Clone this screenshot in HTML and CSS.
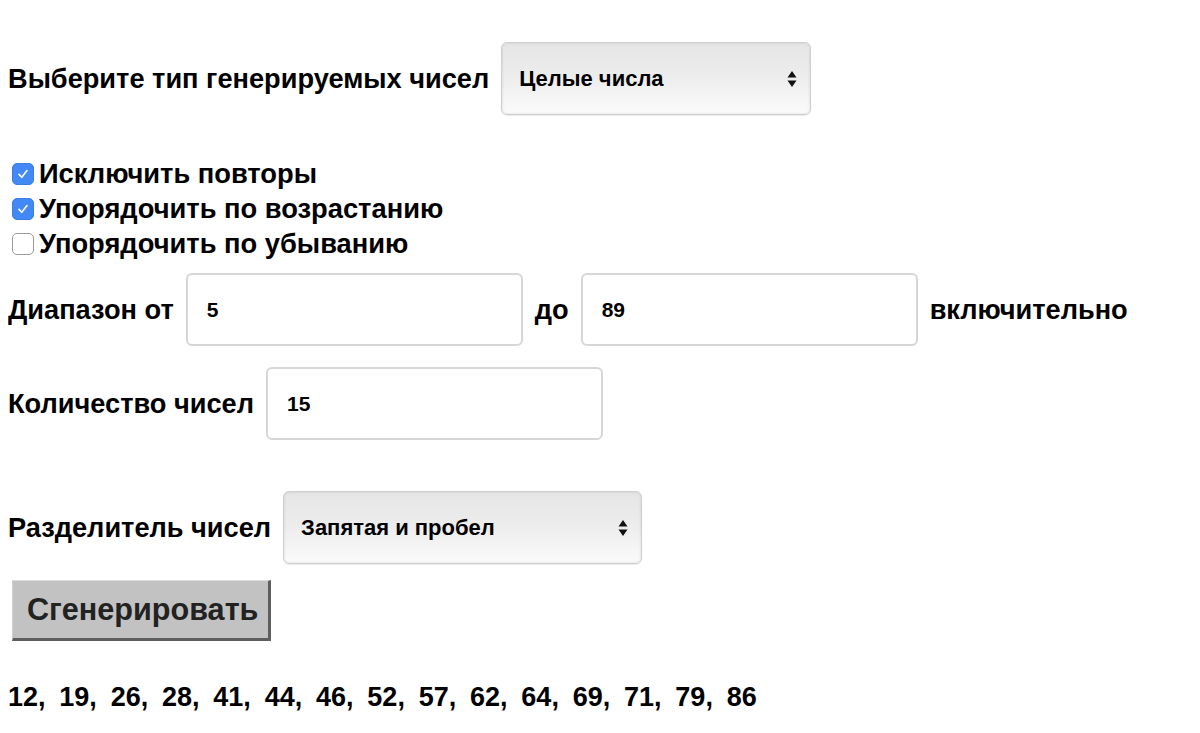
FILE: index.html
```html
<!DOCTYPE html>
<html lang="ru">
<head>
<meta charset="utf-8">
<title>Генератор случайных чисел</title>
<link rel="stylesheet" href="styles.css">
</head>
<body>
<form class="gen">
  <div class="row row-type">
    <span class="lbl">Выберите тип генерируемых чисел</span>
    <span class="sel sel-type">
      <span class="sel-text">Целые числа</span>
      <svg class="arrows" width="10" height="18" viewBox="0 0 10 18"><path d="M5 1 L9.5 7.5 L0.5 7.5 Z M5 17 L9.5 10.5 L0.5 10.5 Z" fill="#111"/></svg>
    </span>
  </div>

  <div class="checks">
    <label class="chk"><span class="box on"><svg width="14" height="14" viewBox="0 0 14 14"><path d="M3 7.4 L5.8 10.3 L11 3.6" fill="none" stroke="#fff" stroke-width="1.6" stroke-linecap="round" stroke-linejoin="round"/></svg></span>Исключить повторы</label>
    <label class="chk"><span class="box on"><svg width="14" height="14" viewBox="0 0 14 14"><path d="M3 7.4 L5.8 10.3 L11 3.6" fill="none" stroke="#fff" stroke-width="1.6" stroke-linecap="round" stroke-linejoin="round"/></svg></span>Упорядочить по возрастанию</label>
    <label class="chk"><span class="box"></span>Упорядочить по убыванию</label>
  </div>

  <div class="row row-range">
    <span class="lbl">Диапазон от</span>
    <span class="inp">5</span>
    <span class="lbl">до</span>
    <span class="inp">89</span>
    <span class="lbl">включительно</span>
  </div>

  <div class="row row-count">
    <span class="lbl">Количество чисел</span>
    <span class="inp">15</span>
  </div>

  <div class="row row-sep">
    <span class="lbl">Разделитель чисел</span>
    <span class="sel sel-sep">
      <span class="sel-text">Запятая и пробел</span>
      <svg class="arrows" width="10" height="18" viewBox="0 0 10 18"><path d="M5 1 L9.5 7.5 L0.5 7.5 Z M5 17 L9.5 10.5 L0.5 10.5 Z" fill="#111"/></svg>
    </span>
  </div>

  <div class="btn-row"><span class="btn">Сгенерировать</span></div>

  <div class="result">12, 19, 26, 28, 41, 44, 46, 52, 57, 62, 64, 69, 71, 79, 86</div>
</form>
</body>
</html>
```

FILE: styles.css
```css
html, body {
  background: #fff;
}
body {
  margin: 8px;
  font-family: "Liberation Sans", Arial, sans-serif;
  font-weight: bold;
  color: #000;
}
.gen {
  display: flex;
  flex-direction: column;
}
.row {
  display: flex;
  align-items: center;
  gap: 12px;
}
.lbl {
  font-size: 27.2px;
  white-space: nowrap;
}
.row-type {
  margin-top: 34px;
}
.sel {
  position: relative;
  display: flex;
  align-items: center;
  height: 73px;
  box-sizing: border-box;
  border: 1px solid #cfcfcf;
  border-radius: 6px;
  background: linear-gradient(#e6e6e6 0%, #ececec 45%, #fbfbfb 100%);
  box-shadow: inset 0 0 3px rgba(0,0,0,0.12), 0 1px 1px rgba(0,0,0,0.08);
  padding-left: 17px;
}
.sel-type { width: 310px; }
.sel-sep { width: 359px; }
.sel-text {
  font-size: 22px;
}
.arrows {
  position: absolute;
  right: 13px;
  top: 27px;
}
.checks {
  margin-top: 41px;
  display: flex;
  flex-direction: column;
}
.chk {
  display: flex;
  align-items: center;
  height: 35px;
  font-size: 27.3px;
}
.box {
  width: 22px;
  height: 22px;
  box-sizing: border-box;
  margin: 0 5px 0 4px;
  border-radius: 5px;
  border: 1px solid #9a9a9a;
  background: #fff;
  display: flex;
  align-items: center;
  justify-content: center;
}
.box.on {
  background: #4289f6;
  border-color: #3a7de8;
}
.row-range {
  margin-top: 12px;
}
.inp {
  display: flex;
  align-items: center;
  width: 337px;
  height: 73px;
  box-sizing: border-box;
  border: 2px solid #d6d6d6;
  border-radius: 6px;
  padding-left: 19px;
  font-size: 21px;
  background: #fff;
}
.row-count {
  margin-top: 21px;
}
.row-sep {
  margin-top: 51px;
}
.btn-row {
  margin-top: 16px;
  display: flex;
}
.btn {
  margin-left: 4px;
  width: 259px;
  height: 61px;
  box-sizing: border-box;
  background: #c2c2c2;
  border-top: 1px solid #dcdcdc;
  border-left: 1px solid #d0d0d0;
  border-right: 3px solid #5e5e5e;
  border-bottom: 3px solid #5e5e5e;
  color: #222;
  font-size: 30.6px;
  display: flex;
  align-items: center;
  padding-left: 14px;
}
.result {
  margin-top: 41px;
  font-size: 27px;
  line-height: 31px;
  word-spacing: 6.3px;
}
```
